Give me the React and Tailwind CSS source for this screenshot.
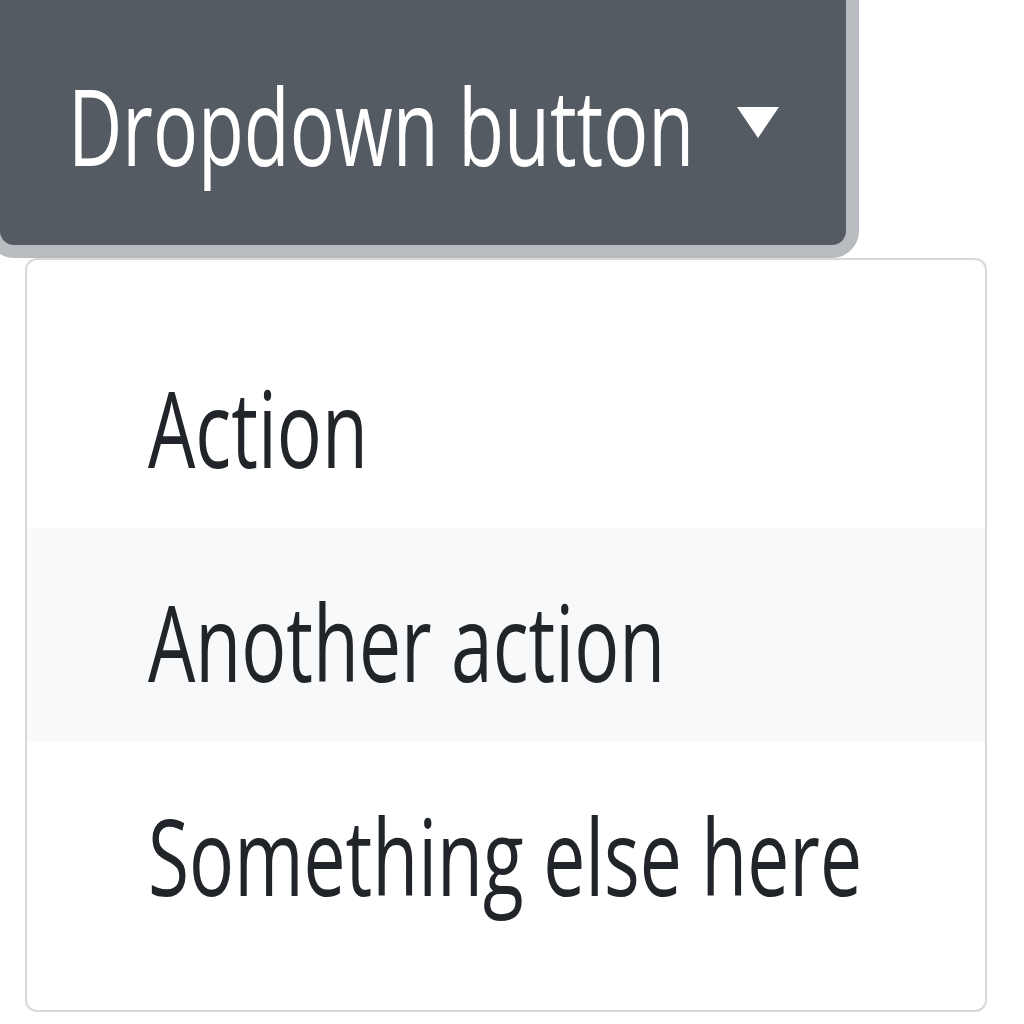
const ITEMS = ["Action", "Another action", "Something else here"];

function Caret() {
  return (
    <svg width="42" height="31" viewBox="0 0 42 31" className="shrink-0">
      <polygon points="0,0 42,0 21,31" fill="#ffffff" />
    </svg>
  );
}

export default function App() {
  return (
    <div className="w-[1024px] h-[1024px] bg-white overflow-hidden font-['Open_Sans',sans-serif]">
      <div className="relative z-0 flex items-start w-[846px] h-[245px] pl-[68px] pt-[71px] bg-[#545b62] rounded-b-[14px] shadow-[0_0_0_13px_#b8bcc0] text-white">
        <div className="w-[669px] shrink-0 whitespace-nowrap">
          <span className="inline-block origin-left scale-x-[0.70] text-[107px] leading-[107px]">
            Dropdown button
          </span>
        </div>
        <div className="pt-[36px]">
          <Caret />
        </div>
      </div>

      <div className="relative z-10 mt-[13px] ml-[25px] w-[962px] bg-white border-2 border-[#d9d9d9] rounded-[12px] py-[54px]">
        {ITEMS.map((item, i) => (
          <div
            key={item}
            className={`h-[214px] pl-[121px] pt-[59px] whitespace-nowrap text-[#212529] ${
              i === 1 ? "bg-[#f8f9fa]" : ""
            }`}
          >
            <span className="inline-block origin-left scale-x-[0.70] text-[107px] leading-[107px]">
              {item}
            </span>
          </div>
        ))}
      </div>
    </div>
  );
}
